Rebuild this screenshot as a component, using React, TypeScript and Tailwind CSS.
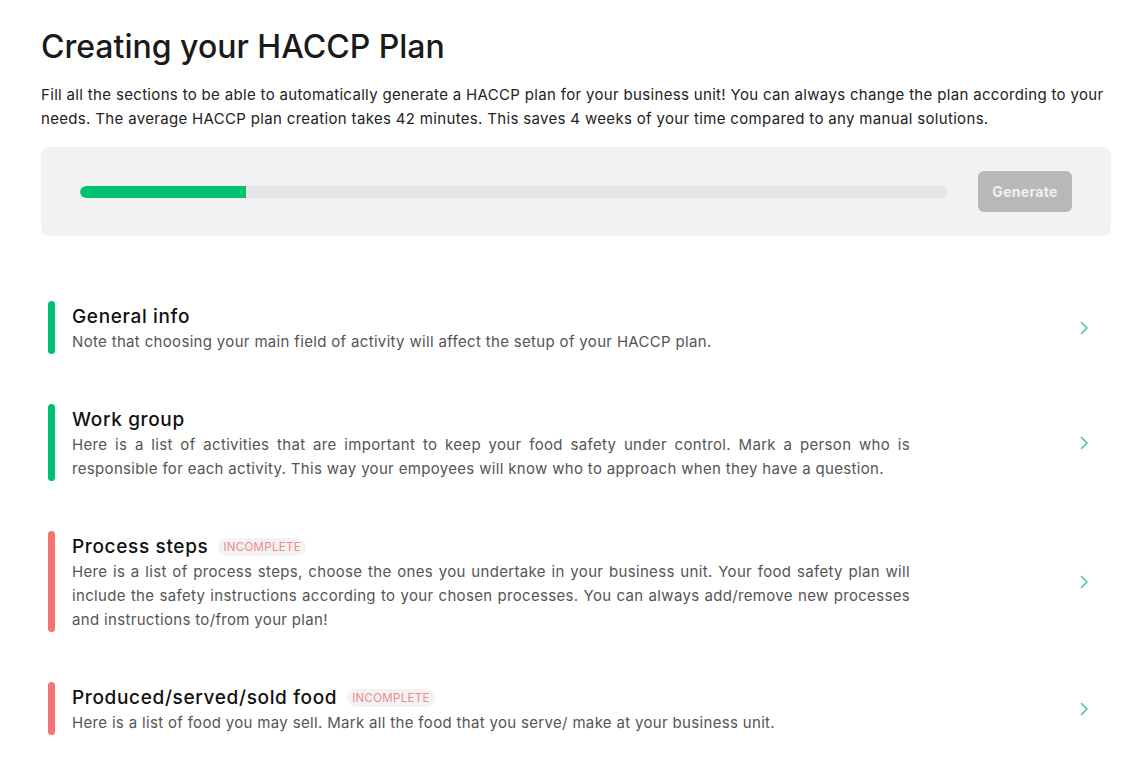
import React from "react";

const font = { fontFamily: 'Inter, "Noto Sans", sans-serif' };

type Section = {
  title: string;
  desc: string;
  done: boolean;
};

const sections: Section[] = [
  {
    title: "General info",
    desc: "Note that choosing your main field of activity will affect the setup of your HACCP plan.",
    done: true,
  },
  {
    title: "Work group",
    desc: "Here is a list of activities that are important to keep your food safety under control. Mark a person who is responsible for each activity. This way your empoyees will know who to approach when they have a question.",
    done: true,
  },
  {
    title: "Process steps",
    desc: "Here is a list of process steps, choose the ones you undertake in your business unit. Your food safety plan will include the safety instructions according to your chosen processes. You can always add/remove new processes and instructions to/from your plan!",
    done: false,
  },
  {
    title: "Produced/served/sold food",
    desc: "Here is a list of food you may sell. Mark all the food that you serve/ make at your business unit.",
    done: false,
  },
];

function Chevron() {
  return (
    <svg width="10" height="14" viewBox="0 0 10 14" fill="none">
      <path d="M2.5 1.5 L8 7 L2.5 12.5" stroke="#45c8a0" strokeWidth="1.6" strokeLinecap="round" strokeLinejoin="round" />
    </svg>
  );
}

export default function App() {
  return (
    <div className="w-[1145px] h-[758px] bg-white overflow-hidden" style={font}>
      <div className="pl-[41px] pr-[34px] pt-[26px]">
        <h1 className="text-[32px] leading-[42px] font-medium text-[#1a1a1a]">
          Creating your HACCP Plan
        </h1>
        <p className="mt-[15px] text-[15px] leading-[23.5px] text-[#222] tracking-[0.33px]">
          Fill all the sections to be able to automatically generate a HACCP plan for your business unit! You can always change the plan according to your needs. The average HACCP plan creation takes 42 minutes. This saves 4 weeks of your time compared to any manual solutions.
        </p>
        <div className="mt-[17px] h-[89px] rounded-[8px] bg-[#f2f2f2] flex items-center pl-[39px] pr-[39px]">
          <div className="flex-1 h-[12px] rounded-full bg-[#e5e5e5] overflow-hidden">
            <div className="h-full w-[166px] rounded-l-full bg-[#00c16e]" />
          </div>
          <button className="ml-[31px] w-[94px] h-[41px] rounded-[6px] bg-[#b8b8b8] text-[#f1f1f1] text-[14px] font-bold tracking-[0.3px]">
            Generate
          </button>
        </div>
        <div className="mt-[65px] pl-[7px] flex flex-col gap-[50px]">
          {sections.map((s) => (
            <div key={s.title} className="flex items-stretch">
              <div className={`w-[7px] rounded-full ${s.done ? "bg-[#00c16e]" : "bg-[#f47373]"}`} />
              <div className="ml-[17px] w-[838px]">
                <div className="flex items-center h-[29px] pt-[3px]">
                  <span className="text-[19px] font-medium text-[#111] tracking-[0.65px]">{s.title}</span>
                  {!s.done && (
                    <span className="ml-[10px] h-[18px] px-[5px] rounded-full bg-[#f3f3f3] text-[#f08a8a] text-[11.5px] leading-[18px] tracking-[0.3px]">
                      INCOMPLETE
                    </span>
                  )}
                </div>
                <p className="text-[15px] leading-[24px] text-[#555] text-justify tracking-[0.33px]">
                  {s.desc}
                </p>
              </div>
              <div className="flex-1 flex items-center justify-end pr-[22px]">
                <Chevron />
              </div>
            </div>
          ))}
        </div>
      </div>
    </div>
  );
}
